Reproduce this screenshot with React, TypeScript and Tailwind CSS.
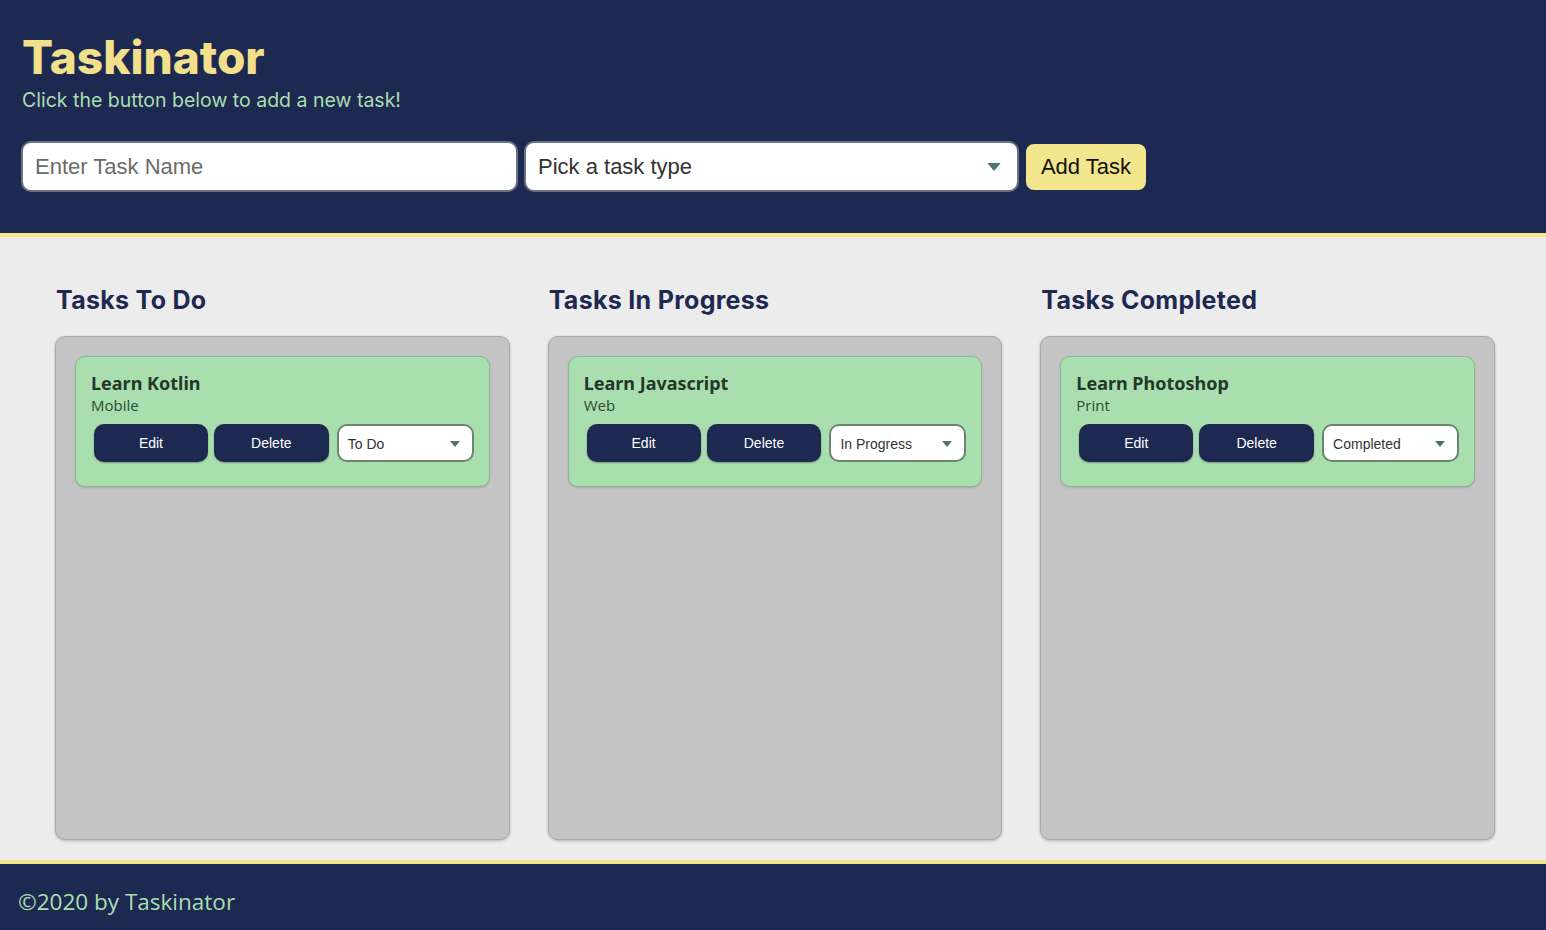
import React from "react";

interface Task {
  name: string;
  type: string;
  status: string;
}

const columns: { title: string; tasks: Task[] }[] = [
  { title: "Tasks To Do", tasks: [{ name: "Learn Kotlin", type: "Mobile", status: "To Do" }] },
  { title: "Tasks In Progress", tasks: [{ name: "Learn Javascript", type: "Web", status: "In Progress" }] },
  { title: "Tasks Completed", tasks: [{ name: "Learn Photoshop", type: "Print", status: "Completed" }] },
];

function Caret({ className }: { className: string }) {
  return (
    <svg className={className} viewBox="0 0 10 6" fill="#4d7475">
      <path d="M0 0h10L5 6z" />
    </svg>
  );
}

function TaskCard({ task }: { task: Task }) {
  return (
    <div className="bg-[#a9dfae] border border-[#8cb892] rounded-[10px] px-[15px] pt-[15px] pb-[24px] shadow-[0_1px_2px_rgba(0,0,0,0.15)]">
      <h3 className="text-[18px] leading-[22px] font-bold text-[#27362a] font-['Noto_Sans',sans-serif]">{task.name}</h3>
      <p className="text-[15px] leading-[22px] text-[#2f4a35] font-['Open_Sans',sans-serif]">{task.type}</p>
      <div className="flex items-center gap-[6px] mt-[8px] pl-[3px] font-['Liberation_Sans',Arial,sans-serif]">
        <button className="w-[114px] h-[38px] rounded-[10px] bg-[#1e2952] text-white text-[14px] shadow-[0_1px_2px_rgba(0,0,0,0.3)]">Edit</button>
        <button className="w-[115px] h-[38px] rounded-[10px] bg-[#1e2952] text-white text-[14px] shadow-[0_1px_2px_rgba(0,0,0,0.3)]">Delete</button>
        <div className="ml-[2px] w-[137px] h-[38px] rounded-[10px] bg-white border-2 border-[#6b8570] flex items-center justify-between pl-[9px] pr-[12px] pt-[2px] text-[14px] text-[#333]">
          <span>{task.status}</span>
          <Caret className="w-[10px] h-[6px]" />
        </div>
      </div>
    </div>
  );
}

export default function App() {
  return (
    <div className="min-h-screen flex flex-col bg-[#ececec]">
      <header className="bg-[#1e2952] border-b-4 border-[#f2e68c] h-[237px] px-[21px] pt-[30px]">
        <h1 className="pl-[1px] text-[46px] leading-[54px] font-extrabold text-[#f2e08a] font-['Inter',sans-serif]">Taskinator</h1>
        <p className="pl-[1px] text-[19.5px] leading-[24px] text-[#a9dfae] font-['Inter',sans-serif] mt-[4px]">Click the button below to add a new task!</p>
        <div className="flex items-center mt-[29px] font-['Liberation_Sans',Arial,sans-serif]">
          <div className="w-[497px] h-[51px] rounded-[10px] bg-white border-2 border-[#6b7280] flex items-center px-[12px] text-[22px] text-[#6b6b6b]">
            Enter Task Name
          </div>
          <div className="ml-[6px] w-[495px] h-[51px] rounded-[10px] bg-white border-2 border-[#6b7280] flex items-center justify-between pl-[12px] pr-[16px] text-[22px] text-[#333]">
            <span>Pick a task type</span>
            <Caret className="w-[14px] h-[8px]" />
          </div>
          <button className="ml-[7px] w-[120px] h-[46px] rounded-[8px] bg-[#f2e68c] text-[22px] text-[#111]">Add Task</button>
        </div>
      </header>

      <main className="flex-1 grid grid-cols-3 gap-[38px] pl-[55px] pr-[51px] pt-[47px] pb-[20px]">
        {columns.map((col) => (
          <section key={col.title} className="flex flex-col">
            <h2 className="pl-[1px] text-[25px] leading-[32px] font-bold tracking-[0.3px] text-[#1e2952] font-['Inter',sans-serif]">{col.title}</h2>
            <div className="mt-[20px] h-[504px] bg-[#c4c4c4] rounded-[10px] border border-[#a8a8a8] shadow-[0_1px_3px_rgba(0,0,0,0.25)] px-[19px] pt-[19px]">
              {col.tasks.map((t) => (
                <TaskCard key={t.name} task={t} />
              ))}
            </div>
          </section>
        ))}
      </main>

      <footer className="bg-[#1e2952] border-t-4 border-[#f2e68c] h-[70px] px-[18px] flex items-center">
        <p className="text-[22.5px] text-[#a9dfae] font-['Open_Sans',sans-serif] pt-[10px]">©2020 by Taskinator</p>
      </footer>
    </div>
  );
}
